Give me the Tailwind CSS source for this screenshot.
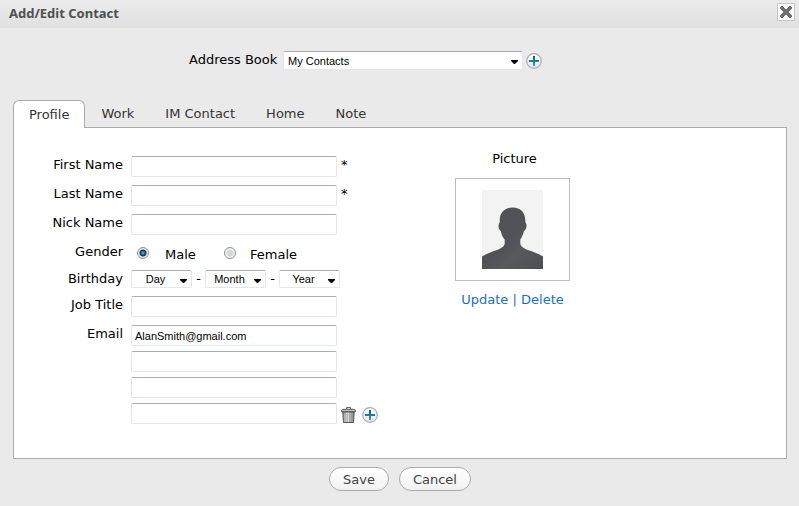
<!DOCTYPE html>
<html lang="en">
<head>
<meta charset="utf-8">
<meta name="viewport" content="width=device-width, initial-scale=1">
<title>Add/Edit Contact</title>
<script src="https://cdn.jsdelivr.net/npm/@tailwindcss/browser@4"></script>
</head>
<body class="min-h-screen bg-[#eaeaea] font-['DejaVu_Sans',Verdana,sans-serif] text-[13px] leading-4 text-black">
<svg class="absolute size-0" aria-hidden="true">
  <defs>
    <linearGradient id="ring" x1="0" y1="0" x2="0" y2="1"><stop offset="0" stop-color="#ffffff"/><stop offset="1" stop-color="#e4e4e4"/></linearGradient>
    <linearGradient id="teal" x1="0" y1="0" x2="0" y2="1"><stop offset="0" stop-color="#0a5878"/><stop offset="1" stop-color="#2fa3bd"/></linearGradient>
    <linearGradient id="body" x1="0" y1="0" x2="1" y2="1"><stop offset="0" stop-color="#505256"/><stop offset=".5" stop-color="#505257"/><stop offset=".65" stop-color="#57595d"/><stop offset="1" stop-color="#4d4f53"/></linearGradient>
    <linearGradient id="can" x1="0" y1="0" x2="1" y2="0"><stop offset="0" stop-color="#888"/><stop offset=".4" stop-color="#fafafa"/><stop offset="1" stop-color="#777"/></linearGradient>
  </defs>
  <symbol id="plus" viewBox="0 0 16 16">
    <circle cx="8" cy="8" r="7.3" fill="url(#ring)" stroke="#adadad" stroke-width="1.2"/>
    <path d="M7 3h2v4h4v2H9v4H7V9H3V7h4z" fill="url(#teal)"/>
  </symbol>
  <symbol id="arrow" viewBox="0 0 7 4"><path d="M0 0h7v1L4 4H3L0 1z" fill="#000"/></symbol>
</svg>

<header class="flex h-7 items-start justify-between bg-linear-to-b from-[#ececec] to-[#e0e0e0] pl-[9px] pr-1 pt-[3px]">
  <h1 class="pt-[2px] font-['Noto_Sans','Open_Sans',sans-serif] text-[13px] font-bold leading-4 text-[#505050]">Add/Edit Contact</h1>
  <button type="button" aria-label="Close" class="size-[18px] shrink-0">
    <svg viewBox="0 0 18 18" class="size-full" shape-rendering="crispEdges"><rect x="0" y="0" width="18" height="18" rx="1" fill="#c6c6c6"/><rect x="1" y="1" width="16" height="16" fill="#fafafa"/><path d="M4 3h2v1h1v1h1v1h2V5h1V4h1V3h2v1h1v2h-1v1h-1v1h-1v2h1v1h1v1h1v2h-1v1h-2v-1h-1v-1h-1v-1H8v1H7v1H6v1H4v-1H3v-2h1v-1h1v-1h1V8H5V7H4V6H3V4h1z" fill="#6f6f6f"/></svg>
  </button>
</header>

<form class="pl-[13px] pr-3">
  <div class="flex items-start pl-44 pt-[23px]">
    <label for="book" class="w-[86px] shrink-0 whitespace-nowrap leading-[18px]">Address Book</label>
    <div class="relative ml-2 w-60">
      <select id="book" class="block h-[19px] w-full appearance-none rounded-xs border border-[#e3e6ee] border-t-[#abadb3] bg-white pl-1 font-['Liberation_Sans',Arial,sans-serif] text-[11px] leading-4"><option>My Contacts</option></select>
      <svg class="pointer-events-none absolute right-[5px] top-[9px] h-1 w-[7px]"><use href="#arrow"/></svg>
    </div>
    <button type="button" aria-label="Add address book" class="ml-[3px] mt-[2px] size-4"><svg class="size-4"><use href="#plus"/></svg></button>
  </div>

  <div role="tablist" class="relative flex items-end gap-px pt-[30px] text-[#333]">
    <button type="button" role="tab" aria-selected="true" class="z-10 -mb-px h-7 rounded-t-md border border-b-0 border-[#ababab] bg-white px-[15px]">Profile</button>
    <button type="button" role="tab" class="h-[27px] px-[15px]">Work</button>
    <button type="button" role="tab" class="h-[27px] px-[15px]">IM Contact</button>
    <button type="button" role="tab" class="h-[27px] px-[15px]">Home</button>
    <button type="button" role="tab" class="h-[27px] px-[15px]">Note</button>
  </div>

  <div role="tabpanel" class="flex items-start border border-[#ababab] bg-white pb-[34px]">
    <div class="flex w-[441px] flex-col gap-2 pt-7">
      <div class="flex items-start gap-2">
        <label for="first" class="w-[109px] text-right leading-[18px]">First Name</label>
        <input id="first" type="text" class="h-[21px] w-[206px] rounded-xs border border-[#e3e6ee] border-t-[#abadb3] bg-white px-[3px] font-['Liberation_Sans',Arial,sans-serif] text-[11px]"><span class="-ml-1 leading-[18px]">*</span>
      </div>
      <div class="flex items-start gap-2">
        <label for="last" class="w-[109px] text-right leading-[18px]">Last Name</label>
        <input id="last" type="text" class="h-[21px] w-[206px] rounded-xs border border-[#e3e6ee] border-t-[#abadb3] bg-white px-[3px] font-['Liberation_Sans',Arial,sans-serif] text-[11px]"><span class="-ml-1 leading-[18px]">*</span>
      </div>
      <div class="flex items-start gap-2">
        <label for="nick" class="w-[109px] text-right leading-[18px]">Nick Name</label>
        <input id="nick" type="text" class="h-[21px] w-[206px] rounded-xs border border-[#e3e6ee] border-t-[#abadb3] bg-white px-[3px] font-['Liberation_Sans',Arial,sans-serif] text-[11px]">
      </div>
      <div class="flex h-[19px] items-start gap-2" role="radiogroup" aria-labelledby="gender">
        <span id="gender" class="w-[109px] text-right leading-[18px]">Gender</span>
        <div class="flex items-start pl-[6px] pt-1">
          <input id="male" type="radio" name="gender" checked class="size-3 appearance-none rounded-full border border-[#8e8f8f] bg-[#f4f4f4] checked:bg-[radial-gradient(circle_at_50%_50%,#6fc4ea_0,#1c79a8_1.5px,#0c2c48_3px,#f0f0f0_4px)]">
          <label for="male" class="ml-4 w-[59px]">Male</label>
          <input id="female" type="radio" name="gender" class="size-3 appearance-none rounded-full border border-[#8e8f8f] bg-[radial-gradient(circle,#d4d6d8_3px,#f4f4f4_4px)]">
          <label for="female" class="ml-[14px]">Female</label>
        </div>
      </div>
      <div class="flex items-start gap-2">
        <label for="day" class="w-[109px] text-right leading-[18px]">Birthday</label>
        <div class="flex items-start">
          <div class="relative w-[61px]">
            <select id="day" class="block h-[18px] w-full appearance-none rounded-xs border border-[#e3e6ee] border-t-[#abadb3] bg-white pr-3 text-center font-['Liberation_Sans',Arial,sans-serif] text-[11px] leading-4"><option>Day</option></select>
            <svg class="pointer-events-none absolute right-[5px] top-[9px] h-1 w-[7px]"><use href="#arrow"/></svg>
          </div>
          <span class="w-[13px] text-center leading-[18px]">-</span>
          <div class="relative w-[61px]">
            <select aria-label="Month" class="block h-[18px] w-full appearance-none rounded-xs border border-[#e3e6ee] border-t-[#abadb3] bg-white pr-3 text-center font-['Liberation_Sans',Arial,sans-serif] text-[11px] leading-4"><option>Month</option></select>
            <svg class="pointer-events-none absolute right-[5px] top-[9px] h-1 w-[7px]"><use href="#arrow"/></svg>
          </div>
          <span class="w-[13px] text-center leading-[18px]">-</span>
          <div class="relative w-[61px]">
            <select aria-label="Year" class="block h-[18px] w-full appearance-none rounded-xs border border-[#e3e6ee] border-t-[#abadb3] bg-white pr-3 text-center font-['Liberation_Sans',Arial,sans-serif] text-[11px] leading-4"><option>Year</option></select>
            <svg class="pointer-events-none absolute right-[5px] top-[9px] h-1 w-[7px]"><use href="#arrow"/></svg>
          </div>
        </div>
      </div>
      <div class="flex items-start gap-2">
        <label for="job" class="w-[109px] text-right leading-[18px]">Job Title</label>
        <input id="job" type="text" class="h-[21px] w-[206px] rounded-xs border border-[#e3e6ee] border-t-[#abadb3] bg-white px-[3px] font-['Liberation_Sans',Arial,sans-serif] text-[11px]">
      </div>
      <div class="flex items-start gap-2">
        <label for="email" class="w-[109px] text-right leading-[18px]">Email</label>
        <div class="flex flex-col gap-[5px]">
          <input id="email" type="text" value="AlanSmith@gmail.com" class="h-[21px] w-[206px] rounded-xs border border-[#e3e6ee] border-t-[#abadb3] bg-white px-[3px] font-['Liberation_Sans',Arial,sans-serif] text-[11px]">
          <input aria-label="Email 2" type="text" class="h-[21px] w-[206px] rounded-xs border border-[#e3e6ee] border-t-[#abadb3] bg-white px-[3px] font-['Liberation_Sans',Arial,sans-serif] text-[11px]">
          <input aria-label="Email 3" type="text" class="h-[21px] w-[206px] rounded-xs border border-[#e3e6ee] border-t-[#abadb3] bg-white px-[3px] font-['Liberation_Sans',Arial,sans-serif] text-[11px]">
          <div class="flex items-center">
            <input aria-label="Email 4" type="text" class="h-[21px] w-[206px] rounded-xs border border-[#e3e6ee] border-t-[#abadb3] bg-white px-[3px] font-['Liberation_Sans',Arial,sans-serif] text-[11px]">
            <button type="button" aria-label="Remove email" class="ml-1 mt-[3px] h-4 w-[15px]">
              <svg viewBox="0 0 15 16" class="h-4 w-[15px]"><path d="M5.5 2V.6h4V2" fill="none" stroke="#555"/><path d="M1.800 5h11.400l-.7 10.500H2.500z" fill="url(#can)" stroke="#4a4a4a" stroke-width=".9"/><path d="M4.700 6l.3 9M6.600 6v9M8.600 6v9M10.500 6l-.3 9" fill="none" stroke="#888" stroke-width=".7"/><path d="M.5 4.600V3.400L2 2.300h11l1.500 1.100v1.200z" fill="#c4c4c4" stroke="#4a4a4a" stroke-width=".9"/></svg>
            </button>
            <button type="button" aria-label="Add email" class="ml-[6px] mt-[3px] size-4"><svg class="size-4"><use href="#plus"/></svg></button>
          </div>
        </div>
      </div>
    </div>

    <section class="flex w-[115px] flex-col items-center pt-[23px]">
      <h2 class="pl-1">Picture</h2>
      <div class="mt-[11px] flex h-[103px] w-full items-center justify-center border border-[#bdbdbd] bg-white">
        <svg role="img" aria-label="Contact picture" viewBox="0 0 61 79" class="h-[79px] w-[61px]"><rect width="61" height="79" fill="#f3f3f3"/><path d="M30.500 17.500C39 17.500 43.500 23 43.300 31C43 32.500 45 34 44.500 36.500C44.200 39 43 40.500 42 41C41 45 39.700 47.500 38.300 49.500V53.500C38.500 56.500 42 58.500 46 60C51 61.900 57 64 61 66.500V79H0V66.500C4 64 10 61.900 15 60C19 58.500 22.500 56.500 22.700 53.500V49.500C21 47.500 19.500 45 18.800 41C17.500 40 16.700 38.500 16.500 36.500C16.200 34 18 33 17.700 31C17.500 23 22 17.500 30.500 17.500Z" fill="url(#body)"/></svg>
      </div>
      <div class="mt-[11px] whitespace-nowrap text-[#1a6fc4]"><a href="#">Update</a> | <a href="#">Delete</a></div>
    </section>
  </div>

  <div class="flex justify-center gap-[10px] pb-[15px] pt-2 text-[#444]">
    <button type="submit" class="h-6 rounded-full border border-[#ababab] bg-linear-to-b from-white to-[#f1f1f1] px-[13px] pt-px">Save</button>
    <button type="button" class="h-6 rounded-full border border-[#ababab] bg-linear-to-b from-white to-[#f1f1f1] px-[13px] pt-px">Cancel</button>
  </div>
</form>
</body>
</html>
